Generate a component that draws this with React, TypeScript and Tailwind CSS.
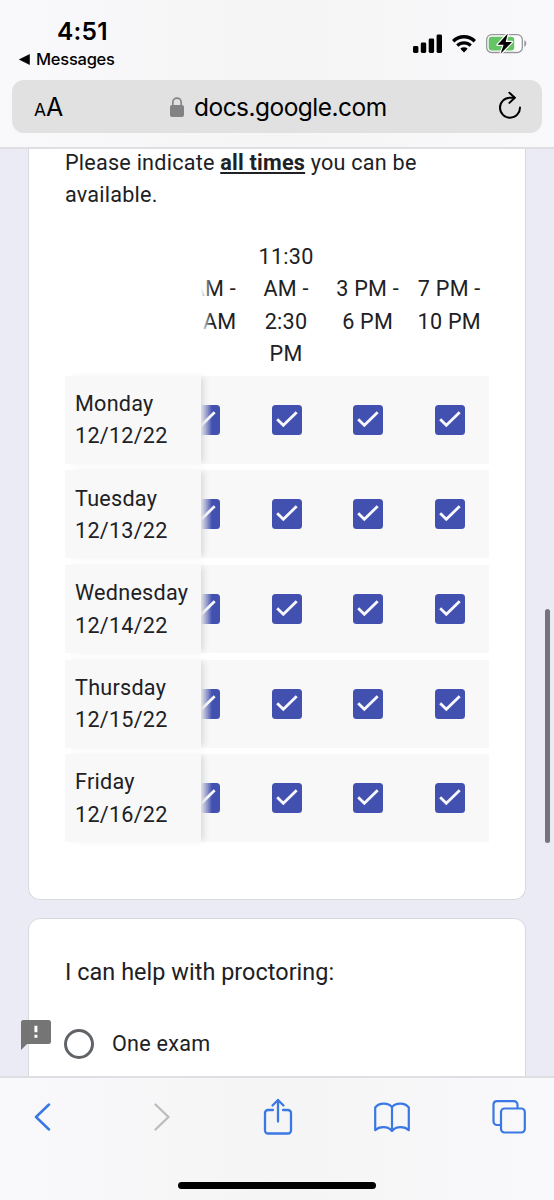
const COLUMNS = [
  ['8 AM -', '11 AM'],
  ['11:30', 'AM -', '2:30', 'PM'],
  ['3 PM -', '6 PM'],
  ['7 PM -', '10 PM'],
];

const DAYS = [
  { name: 'Monday', date: '12/12/22' },
  { name: 'Tuesday', date: '12/13/22' },
  { name: 'Wednesday', date: '12/14/22' },
  { name: 'Thursday', date: '12/15/22' },
  { name: 'Friday', date: '12/16/22' },
];

const barClass = 'bg-linear-to-r from-[#f9f9fc] via-[#f5f5f5] to-[#f9f9fc]';

export default function App() {
  return (
    <div className="relative flex h-[1200px] w-[554px] flex-col overflow-hidden bg-[#ebebf6] font-['Roboto',sans-serif] text-[#202124]">
      <header className={`h-[149px] shrink-0 border-b-2 border-[#dfdfe3] px-3 font-['Inter',sans-serif] text-black ${barClass}`}>
        <StatusBar />
        <AddressBar />
      </header>
      <main className="flex min-h-0 flex-1 flex-col gap-[18px] overflow-hidden px-7">
        <AvailabilityCard />
        <ProctoringCard />
      </main>
      <BottomBar />
      <div className="absolute top-[609px] left-[545px] h-[234px] w-[5px] rounded-full bg-[#74747d]" />
    </div>
  );
}

function StatusBar() {
  return (
    <div className="flex h-20 justify-between">
      <div className="pt-[17px] pl-[7px]">
        <div className="pl-[38px] text-[24.5px] leading-[28px] font-semibold tracking-[0.2px]">4:51</div>
        <div className="flex items-center gap-[6px] pt-1 text-[16.5px] leading-[20px] font-medium tracking-[-0.25px]">
          <svg width="11" height="11" viewBox="0 0 11 11">
            <path d="M.4 5.5 10.5.5v10z" fill="#000" stroke="#000" strokeWidth=".6" strokeLinejoin="round" />
          </svg>
          Messages
        </div>
      </div>
      <div className="flex items-start gap-[10px] pt-[34px] pr-[15px]">
        <svg width="29" height="19" viewBox="0 0 29 19">
          <rect x="0" y="12" width="5.4" height="7" rx="1.4" />
          <rect x="7.8" y="8.5" width="5.4" height="10.5" rx="1.4" />
          <rect x="15.7" y="4.5" width="5.4" height="14.5" rx="1.4" />
          <rect x="23.6" y="0.5" width="5.4" height="18.5" rx="1.4" />
        </svg>
        <svg width="24" height="19" viewBox="0 0 24 19">
          <path d="M1.2 7.2a15.5 15.5 0 0 1 21.6 0" fill="none" stroke="#000" strokeWidth="3.5" />
          <path d="M5.3 11.6a9.6 9.6 0 0 1 13.4 0" fill="none" stroke="#000" strokeWidth="3.2" />
          <path d="M8.3 14.8a5.4 5.4 0 0 1 7.4 0L12 18.5z" />
        </svg>
        <svg width="41" height="19" viewBox="0 0 41 19" overflow="visible">
          <rect x=".7" y=".7" width="35.6" height="17.8" rx="5" fill="#fff" stroke="#97979b" strokeWidth="1.3" />
          <rect x="2.7" y="2.7" width="25.5" height="13.8" rx="3" fill="#65c466" />
          <path d="M38.3 6.3c2.6 1 2.6 5.6 0 6.6z" fill="#97979b" />
          <path
            d="M21.8-.6 11.6 10.8h6L14.6 19.8 26 8h-6.300z"
            stroke="#fff"
            strokeWidth="2.4"
            strokeLinejoin="round"
            paintOrder="stroke"
          />
        </svg>
      </div>
    </div>
  );
}

function AddressBar() {
  return (
    <div className="flex h-[53px] items-center rounded-[12px] bg-[#e1e1e2] pr-[20px] pl-[22px]">
      <div className="flex w-[136px] items-baseline pt-[3px]">
        <span className="text-[17.5px]">A</span>
        <span className="text-[25px] leading-[30px] tracking-[-0.5px]">A</span>
      </div>
      <div className="flex items-center gap-[10px]">
        <svg width="14" height="20" viewBox="0 0 14 20">
          <rect y="8" width="14" height="12" rx="2" fill="#828284" />
          <path d="M2.8 9V5.3a4.2 4.2 0 0 1 8.4 0V9" fill="none" stroke="#828284" strokeWidth="1.6" />
        </svg>
        <span className="text-[24.5px] leading-[30px] tracking-[-0.53px]">docs.google.com</span>
      </div>
      <svg className="-mt-[3px] ml-auto" width="24" height="28" viewBox="0 0 24 28" fill="none" stroke="#000" strokeWidth="2" strokeLinecap="round" strokeLinejoin="round">
        <path d="M22 16.5A10 10 0 1 1 12 6.700h4.600" />
        <path d="m11.4 1.7 5.400 5-5.400 5.200" />
      </svg>
    </div>
  );
}

function AvailabilityCard() {
  return (
    <section className="flex h-[751px] shrink-0 flex-col rounded-b-[12px] border border-t-0 border-[#d8d9df] bg-white px-9 text-[21.6px] leading-[32.4px] tracking-[0.25px]">
      <p className="-mt-[2px] tracking-[0.23px]">
        Please indicate <b className="font-bold underline decoration-2 underline-offset-2">all times</b> you can be
        <br />
        available.
      </p>
      <div className="mt-[29px] flex h-[130px] w-[425px]">
        <div className="w-[136px] shrink-0" />
        <div className="relative flex flex-1 items-center justify-end overflow-hidden">
          {COLUMNS.map((lines) => (
            <div key={lines[0]} className="w-[81.6px] shrink-0 text-center">
              {lines.map((line) => (
                <div key={line} className="whitespace-nowrap">{line}</div>
              ))}
            </div>
          ))}
          <div className="absolute inset-y-0 left-0 w-[11px] bg-linear-to-r from-white to-transparent" />
        </div>
      </div>
      <div className="mt-[5px] flex w-[424px] flex-col gap-[6.6px]">
        {DAYS.map((day) => (
          <DayRow key={day.name} name={day.name} date={day.date} />
        ))}
      </div>
    </section>
  );
}

function DayRow({ name, date }: { name: string; date: string }) {
  return (
    <div className="flex h-[88px] bg-[#f8f8f9]">
      <div className="relative z-10 flex w-[136px] shrink-0 flex-col justify-center bg-[#f8f8f9] pt-px pl-[10px] shadow-[5px_0_6px_-2px_rgba(60,64,67,0.15)]">
        <div>{name}</div>
        <div>{date}</div>
      </div>
      <div className="relative -mr-[1.5px] flex flex-1 items-center justify-end overflow-hidden">
        {COLUMNS.map((lines) => (
          <div key={lines[0]} className="flex w-[81.6px] shrink-0 justify-center">
            <CheckedBox />
          </div>
        ))}
        <div className="absolute inset-y-0 left-0 w-[11px] bg-linear-to-r from-[#f8f8f9] to-transparent" />
      </div>
    </div>
  );
}

function CheckedBox() {
  return (
    <svg width="30" height="30" viewBox="0 0 30 30">
      <rect width="30" height="30" rx="3.5" fill="#4250af" />
      <path d="m5.2 14.300 6.100 6L24.700 7.200" fill="none" stroke="#f8f8fc" strokeWidth="2.800" />
    </svg>
  );
}

function ProctoringCard() {
  return (
    <section className="h-[300px] shrink-0 rounded-[12px] border border-[#d8d9df] bg-white px-9 pt-[37px]">
      <h2 className="text-[23.4px] leading-[32px] tracking-[0.05px]">I can help with proctoring:</h2>
      <div className="relative mt-10 -ml-px flex items-center gap-[18px] text-[21.6px] leading-[32px] tracking-[0.25px]">
        <span className="h-[30px] w-[30px] rounded-full border-3 border-[#606367]" />
        One exam
        <svg className="absolute -top-[8px] -left-[43px]" width="30" height="30" viewBox="0 0 30 30">
          <path
            d="M2.5 0h25A2.5 2.5 0 0 1 30 2.5v19a2.5 2.5 0 0 1-2.5 2.5H6l-6 6V2.5A2.5 2.5 0 0 1 2.5 0z"
            fill="#6b6b6b"
            fillOpacity=".93"
          />
          <path d="M13.400 5.700h3v6.500h-3zM13.400 14.800h3v3h-3z" fill="#fff" />
        </svg>
      </div>
    </section>
  );
}

function BottomBar() {
  return (
    <nav className={`flex h-[124px] shrink-0 flex-col items-center border-t-2 border-[#dfdfe3] ${barClass}`}>
      <div className="flex h-[78px] w-full items-center justify-between pr-[28px] pl-[34px] text-[#3a78e4]">
        <svg width="17" height="28" viewBox="0 0 17 28" fill="none" stroke="currentColor" strokeWidth="2.5" strokeLinecap="round" strokeLinejoin="round">
          <path d="M15 1.5 2 14l13 12.5" />
        </svg>
        <svg className="ml-[36px]" width="17" height="28" viewBox="0 0 17 28" fill="none" stroke="#bcbcbd" strokeWidth="2.300" strokeLinecap="round" strokeLinejoin="round">
          <path d="M1.500 1.500 14.500 14l-13 12.500" />
        </svg>
        <svg className="ml-[25px]" width="30" height="38" viewBox="0 0 30 38" fill="none" stroke="currentColor" strokeWidth="2.300" strokeLinecap="round" strokeLinejoin="round">
          <path d="M10 12H5a3 3 0 0 0-3 3v17.500a3 3 0 0 0 3 3h20a3 3 0 0 0 3-3V15a3 3 0 0 0-3-3h-5" />
          <path d="M15 23.500V2M9.500 7.500 15 2l5.500 5.500" />
        </svg>
        <svg className="ml-[15px]" width="36" height="31" viewBox="0 0 36 31" fill="none" stroke="currentColor" strokeWidth="2.200" strokeLinejoin="round">
          <path d="M18 5.200C14.500.4 5 .2 1.200 5.500v22.700c3.800-3.800 12.500-4.500 16.800.8 4.300-5.300 13-4.600 16.800-.8V5.500C31 .2 21.500.4 18 5.200zV29" />
        </svg>
        <svg className="ml-[15px]" width="34" height="34" viewBox="0 0 34 34" fill="none" stroke="currentColor" strokeWidth="2.200">
          <path d="M9 25H5a3.500 3.500 0 0 1-3.500-3.500v-17A3.500 3.500 0 0 1 5 1.200h17a3.500 3.500 0 0 1 3.500 3.500v4" />
          <rect x="9" y="8.500" width="23.800" height="24" rx="3.500" />
        </svg>
      </div>
      <div className="mt-[26px] h-[7px] w-[198px] rounded-full bg-black" />
    </nav>
  );
}
